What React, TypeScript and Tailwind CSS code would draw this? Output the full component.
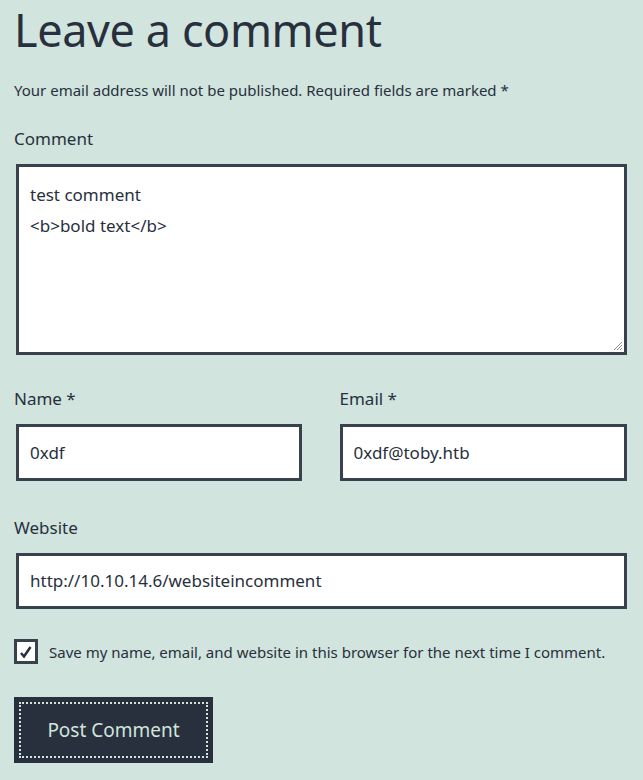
export default function App() {
  return (
    <div className="min-h-[780px] w-[643px] bg-[#d1e4dd] text-[#28303d] font-['Noto_Sans',sans-serif] overflow-hidden">
      <h2 className="pl-[14px] text-[45px] leading-[60px] tracking-[-0.4px] font-normal whitespace-nowrap">Leave a comment</h2>
      <p className="mt-[19px] pl-[14px] text-[15px] leading-[22px]">
        Your email address will not be published. Required fields are marked *
      </p>

      <div className="mt-[26px] pl-[14px] pr-[16px]">
        <label className="block text-[17px] leading-[24px]">Comment</label>
        <div className="relative mt-[13px] ml-[2px] h-[191px] border-[3px] border-[#39414d] bg-white px-[11px] pt-[12px] text-[17px] leading-[31px]">
          <div>test comment</div>
          <div>&lt;b&gt;bold text&lt;/b&gt;</div>
          <svg className="absolute right-[1px] bottom-[1px]" width="11" height="11" viewBox="0 0 11 11">
            <path d="M10 2 L2 10 M10 5 L5 10 M10 8 L8 10" stroke="#8a8a8a" strokeWidth="1" />
          </svg>
        </div>
      </div>

      <div className="mt-[32px] flex gap-[38px] pl-[14px] pr-[16px]">
        <div className="flex-1">
          <label className="block text-[17px] leading-[24px]">Name *</label>
          <div className="mt-[13px] ml-[2px] h-[57px] border-[3px] border-[#39414d] bg-white px-[11px] text-[17px] leading-[51px]">0xdf</div>
        </div>
        <div className="flex-1">
          <label className="block text-[17px] leading-[24px]">Email *</label>
          <div className="mt-[13px] h-[57px] border-[3px] border-[#39414d] bg-white px-[11px] text-[17px] leading-[51px]">0xdf@toby.htb</div>
        </div>
      </div>

      <div className="mt-[35px] pl-[14px] pr-[16px]">
        <label className="block text-[17px] leading-[24px]">Website</label>
        <div className="mt-[13px] ml-[2px] h-[56px] border-[3px] border-[#39414d] bg-white px-[11px] text-[17px] leading-[50px]">
          http://10.10.14.6/websiteincomment
        </div>
      </div>

      <div className="mt-[30px] flex items-center gap-[11px] pl-[14px]">
        <div className="flex h-[25px] w-[24px] items-center justify-center border-[3px] border-[#39414d] bg-white">
          <svg width="14" height="14" viewBox="0 0 14 14">
            <path d="M2 8 L5 11.5 L11.5 2" fill="none" stroke="#28303d" strokeWidth="2.5" />
          </svg>
        </div>
        <span className="text-[15px] leading-[22px]">Save my name, email, and website in this browser for the next time I comment.</span>
      </div>

      <div className="mt-[33px] pl-[14px]">
        <button className="flex h-[66px] w-[199px] items-center justify-center bg-[#28303d] p-[5px]">
          <span className="flex h-full w-full items-center justify-center border-2 border-dotted border-[#d1e4dd] text-[19px] text-[#d1e4dd]">
            Post Comment
          </span>
        </button>
      </div>
    </div>
  );
}
